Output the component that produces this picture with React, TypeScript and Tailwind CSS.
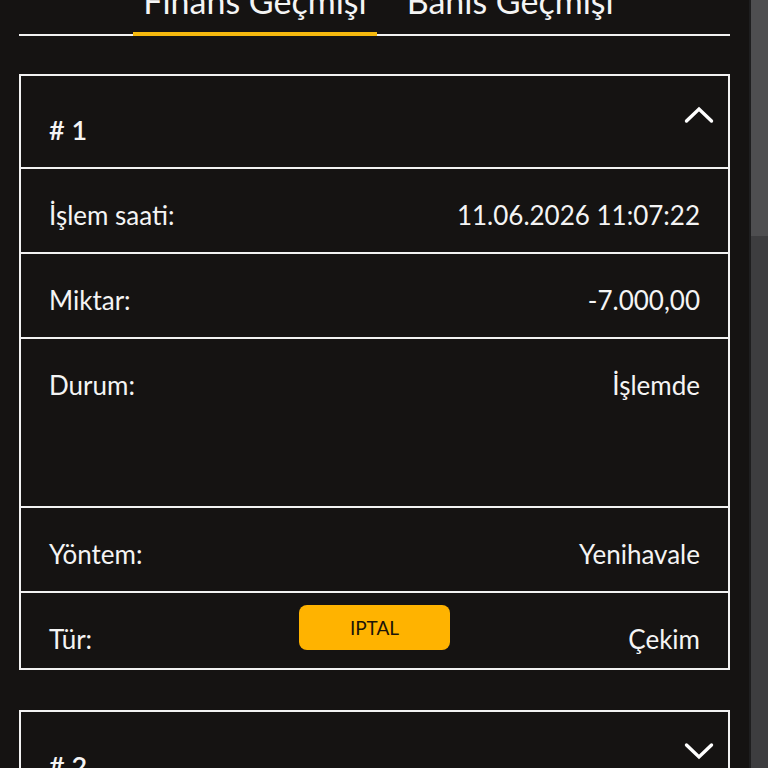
import { JSX } from "react";

type Row = {
  label: string;
  value: string;
  tall?: boolean;
};

const rows: Row[] = [
  { label: "İşlem saati:", value: "11.06.2026 11:07:22" },
  { label: "Miktar:", value: "-7.000,00" },
  { label: "Durum:", value: "İşlemde", tall: true },
  { label: "Yöntem:", value: "Yenihavale" },
];

function Chevron({ up }: { up?: boolean }): JSX.Element {
  return (
    <svg width="30" height="18" viewBox="0 0 30 18" fill="none">
      <path
        d={up ? "M2.5 15 L15 3 L27.5 15" : "M2.5 3 L15 15 L27.5 3"}
        stroke="#ffffff"
        strokeWidth="3.4"
        strokeLinecap="round"
        strokeLinejoin="miter"
      />
    </svg>
  );
}

function CardHeader({ num, open }: { num: number; open?: boolean }): JSX.Element {
  return (
    <div className="flex items-start justify-between px-[28px] h-[91px]">
      <span className="mt-[40px] text-[27px] leading-[28px] font-semibold">
        #&nbsp;{num}
      </span>
      <span className="mt-[30px] mr-[-14px]">
        <Chevron up={open} />
      </span>
    </div>
  );
}

export default function App(): JSX.Element {
  return (
    <div
      className="w-[768px] h-[768px] overflow-hidden flex bg-[#151312] text-[#f4f4f4]"
      style={{ fontFamily: "Lato, 'Open Sans', sans-serif" }}
    >
      <div className="flex-1 px-[19px]">
        <div className="mt-[-20px] pl-[8px] flex justify-center gap-5 border-b-2 border-[#f2f2f2]">
          <div className="px-[10px] pb-[10px] border-b-4 border-[#f6b90e] mb-[-2px] text-[34px] leading-[42px]">
            Finans Geçmişi
          </div>
          <div className="px-[10px] pb-[10px] border-b-4 border-transparent mb-[-2px] text-[34px] leading-[42px]">
            Bahis Geçmişi
          </div>
        </div>

        <div className="mt-[38px] flex flex-col gap-[40px]">
          <div className="border-2 border-[#f2f2f2]">
            <CardHeader num={1} open />
            {rows.map((r) => (
              <div
                key={r.label}
                className={`flex items-start justify-between px-[28px] pt-[32px] border-t-2 border-[#f2f2f2] text-[26px] leading-[28px] ${
                  r.tall ? "h-[169px]" : "h-[85px]"
                }`}
              >
                <span>{r.label}</span>
                <span>{r.value}</span>
              </div>
            ))}
            <div className="grid grid-cols-[1fr_auto_1fr] items-start px-[28px] pt-[12px] pb-[15px] border-t-2 border-[#f2f2f2] text-[26px] leading-[28px]">
              <span className="mt-[20px]">Tür:</span>
              <button className="w-[151px] h-[45px] rounded-[8px] bg-[#ffb300] text-[#1c1408] text-[19px] leading-none">
                IPTAL
              </button>
              <span className="mt-[20px] text-right">Çekim</span>
            </div>
          </div>

          <div className="border-2 border-[#f2f2f2]">
            <CardHeader num={2} />
          </div>
        </div>
      </div>

      <div className="w-[19px] flex flex-col bg-[#3d3d3f] border-l-2 border-[#1e1e1f]">
        <div className="h-[236px] bg-[#4e4e50]" />
      </div>
    </div>
  );
}
